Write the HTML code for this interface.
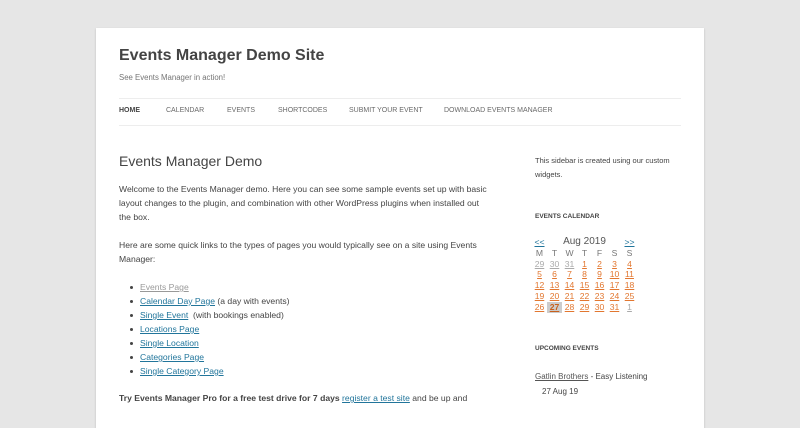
<!DOCTYPE html>
<html><head><meta charset="utf-8"><style>
body{margin:0;background:#e6e6e6;font-family:"Liberation Sans",sans-serif;color:#444;}
.page{position:absolute;left:96px;top:28px;width:608px;height:400px;background:#fff;box-shadow:0 1px 2px rgba(0,0,0,.2);}
.a{position:absolute;white-space:nowrap;}
h1{margin:0;font-size:16px;font-weight:bold;color:#444;}
.tag{font-size:7.8px;color:#757575;}
.nav{position:absolute;left:23px;width:562px;top:70px;height:26px;border-top:1px solid #ededed;border-bottom:1px solid #ededed;}
.nav span{position:absolute;top:8px;font-size:7px;color:#6a6a6a;}
.p{font-size:8.6px;line-height:14px;color:#444;}
.lnk{color:#21759b;text-decoration:underline;}
ul{margin:0;padding:0;list-style:none;}
li{position:relative;}
li:before{content:"";position:absolute;left:-10px;top:6px;width:3px;height:3px;background:#444;border-radius:50%;}
.wt{font-size:6.5px;font-weight:bold;color:#444;}
table{border-collapse:collapse;font-size:8.6px;}
td{width:15px;height:10.8px;padding:0;text-align:center;line-height:10.8px;}
td a{color:#e27730;text-decoration:underline;}
.g{color:#aaa;}
</style></head><body>
<div class="page">
<div class="a" style="left:23px;top:19px;"><h1>Events Manager Demo Site</h1></div>
<div class="a tag" style="left:23px;top:45px;">See Events Manager in action!</div>
<div class="nav">
<span style="left:0;color:#444;font-weight:bold;">HOME</span>
<span style="left:47px">CALENDAR</span>
<span style="left:108px">EVENTS</span>
<span style="left:159px">SHORTCODES</span>
<span style="left:230px">SUBMIT YOUR EVENT</span>
<span style="left:325px">DOWNLOAD EVENTS MANAGER</span>
</div>
<div class="a" style="left:23px;top:125px;font-size:14px;color:#444;">Events Manager Demo</div>
<div class="a p" style="left:23px;top:154px;">Welcome to the Events Manager demo. Here you can see some sample events set up with basic<br>layout changes to the plugin, and combination with other WordPress plugins when installed out<br>the box.</div>
<div class="a p" style="left:23px;top:210px;">Here are some quick links to the types of pages you would typically see on a site using Events<br>Manager:</div>
<ul class="a p" style="left:44px;top:252px;">
<li><span class="lnk" style="color:#999">Events Page</span></li>
<li><span class="lnk">Calendar Day Page</span> (a day with events)</li>
<li><span class="lnk">Single Event</span>&nbsp; (with bookings enabled)</li>
<li><span class="lnk">Locations Page</span></li>
<li><span class="lnk">Single Location</span></li>
<li><span class="lnk">Categories Page</span></li>
<li><span class="lnk">Single Category Page</span></li>
</ul>
<div class="a p" style="left:23px;top:363px;"><b>Try Events Manager Pro for a free test drive for 7 days</b> <span class="lnk">register a test site</span> and be up and</div>

<div class="a p" style="left:439px;top:126px;font-size:7.5px;">This sidebar is created using our custom<br>widgets.</div>
<div class="a wt" style="left:439px;top:185px;">EVENTS CALENDAR</div>
<table class="a" style="left:436px;top:209px;color:#777;">
<tr><td><a style="color:#21759b">&lt;&lt;</a></td><td colspan="5" style="font-size:10px;color:#555">Aug 2019</td><td><a style="color:#21759b">&gt;&gt;</a></td></tr>
<tr><td>M</td><td>T</td><td>W</td><td>T</td><td>F</td><td>S</td><td>S</td></tr>
<tr><td><a class="g">29</a></td><td><a class="g">30</a></td><td><a class="g">31</a></td><td><a>1</a></td><td><a>2</a></td><td><a>3</a></td><td><a>4</a></td></tr>
<tr><td><a>5</a></td><td><a>6</a></td><td><a>7</a></td><td><a>8</a></td><td><a>9</a></td><td><a>10</a></td><td><a>11</a></td></tr>
<tr><td><a>12</a></td><td><a>13</a></td><td><a>14</a></td><td><a>15</a></td><td><a>16</a></td><td><a>17</a></td><td><a>18</a></td></tr>
<tr><td><a>19</a></td><td><a>20</a></td><td><a>21</a></td><td><a>22</a></td><td><a>23</a></td><td><a>24</a></td><td><a>25</a></td></tr>
<tr><td><a>26</a></td><td style="background:#ccc"><a style="font-weight:bold;color:#c8601c">27</a></td><td><a>28</a></td><td><a>29</a></td><td><a>30</a></td><td><a>31</a></td><td><a class="g">1</a></td></tr>
</table>
<div class="a wt" style="left:439px;top:317px;">UPCOMING EVENTS</div>
<div class="a p" style="left:439px;top:342px;font-size:8px;"><span style="text-decoration:underline;color:#555">Gatlin Brothers</span> - Easy Listening</div>
<div class="a p" style="left:446px;top:357px;font-size:8px;">27 Aug 19</div>
</div>
</body></html>
